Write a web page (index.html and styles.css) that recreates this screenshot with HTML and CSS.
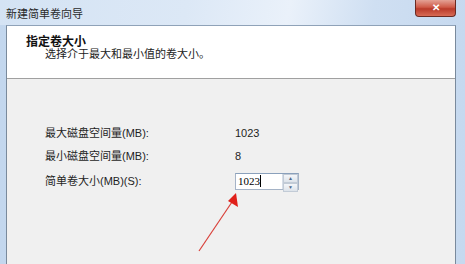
FILE: index.html
```html
<!DOCTYPE html>
<html lang="zh-CN">
<head>
  <meta charset="UTF-8" />
  <title>新建简单卷向导</title>
  <link rel="stylesheet" href="styles.css">
</head>
<body>
  <div class="window">
    <div class="titlebar">
      <span class="title">新建简单卷向导</span>
      <div class="close-btn">&#x2715;</div>
    </div>

    <div class="frame">
      <div class="content">
        <div class="header">
          <div class="header-title">指定卷大小</div>
          <div class="header-sub">选择介于最大和最小值的卷大小。</div>
        </div>

        <div class="panel">
          <div class="form">
            <div class="label">最大磁盘空间量(MB):</div>
            <div class="value">1023</div>

            <div class="label">最小磁盘空间量(MB):</div>
            <div class="value">8</div>

            <div class="label">简单卷大小(MB)(S):</div>
            <div class="spin">
              <div class="spin-input">1023<span class="caret"></span></div>
              <div class="spin-buttons">
                <div class="spin-btn">&#9650;</div>
                <div class="spin-btn">&#9660;</div>
              </div>
            </div>
          </div>
        </div>
      </div>
    </div>

    <!-- red annotation arrow pointing at the size box -->
    <svg class="arrow" width="465" height="264" viewBox="0 0 465 264">
      <line x1="199" y1="251" x2="232" y2="202" stroke="#d9403a" stroke-width="1.2" />
      <polygon points="236,193 238,207 228,201" fill="#e0201a" />
    </svg>
  </div>
</body>
</html>
```

FILE: styles.css
```css
* {
  box-sizing: border-box;
  margin: 0;
  padding: 0;
}

body {
  width: 465px;
  height: 264px;
  overflow: hidden;
  font-family: "Liberation Sans", "Noto Sans CJK SC", sans-serif;
  font-size: 11px;
  color: #1e1e1e;
}

.window {
  position: relative;
  width: 465px;
  height: 264px;
  display: flex;
  flex-direction: column;
  background: linear-gradient(to right, #c3d7ee, #d6e4f4 60%, #c6d9ef);
}

.titlebar {
  height: 25px;
  display: flex;
  align-items: flex-start;
  justify-content: space-between;
  background: linear-gradient(100deg, #d4e3f4 0%, #dce8f6 40%, #eaf1fa 62%, #cfdff2 80%, #c6d9ef 100%);
}

.title {
  padding: 7px 0 0 6px;
  line-height: 14px;
  color: #2a2a2a;
}

.close-btn {
  width: 41px;
  height: 17px;
  margin-right: 9px;
  border: 1px solid #6b2a22;
  border-top: none;
  border-radius: 0 0 4px 4px;
  background: linear-gradient(to bottom, #e4a195, #cf5a48 45%, #b93a2a 55%, #d86b55);
  color: #fff;
  font-size: 10px;
  font-weight: bold;
  text-align: center;
  line-height: 16px;
}

.frame {
  flex: 1;
  display: flex;
  padding: 0 9px 0 6px;
}

.content {
  flex: 1;
  display: flex;
  flex-direction: column;
  border-left: 1px solid #7a8a9c;
  border-right: 1px solid #7a8a9c;
  border-top: 1px solid #8fa2b8;
}

.header {
  height: 53px;
  background: #fff;
  padding: 10px 0 0 19px;
  border-bottom: 1px solid #a0a0a0;
  box-shadow: 0 1px 0 #fff;
}

.header-title {
  font-size: 12px;
  font-weight: bold;
  line-height: 12px;
  color: #111;
}

.header-sub {
  padding-left: 19px;
  line-height: 13px;
  color: #222;
}

.panel {
  flex: 1;
  background: #f0f0f0;
  padding: 46px 0 0 38px;
}

.form {
  display: grid;
  grid-template-columns: 190px auto;
  row-gap: 7px;
  align-items: center;
}

.label,
.value {
  line-height: 16px;
}

.spin {
  display: flex;
  width: 64px;
  height: 17px;
  margin-top: 2px;
  border: 1px solid #a5b3c6;
  border-top-color: #8aa0bb;
  background: #fff;
}

.spin-input {
  flex: 1;
  padding-left: 2px;
  line-height: 15px;
  font-family: "Liberation Serif", "Noto Sans CJK SC", serif;
  font-size: 11px;
  color: #000;
}

.caret {
  display: inline-block;
  width: 1px;
  height: 12px;
  background: #000;
  vertical-align: -2px;
}

.spin-buttons {
  width: 16px;
  display: flex;
  flex-direction: column;
  border-left: 1px solid #d6dde7;
}

.spin-btn {
  flex: 1;
  font-size: 5px;
  line-height: 7px;
  text-align: center;
  color: #4f6a8c;
  background: linear-gradient(to bottom, #f4f6f9, #dde3ea);
  border: 1px solid #c2cbd6;
}

.arrow {
  position: absolute;
  top: 0;
  left: 0;
  pointer-events: none;
}
```
